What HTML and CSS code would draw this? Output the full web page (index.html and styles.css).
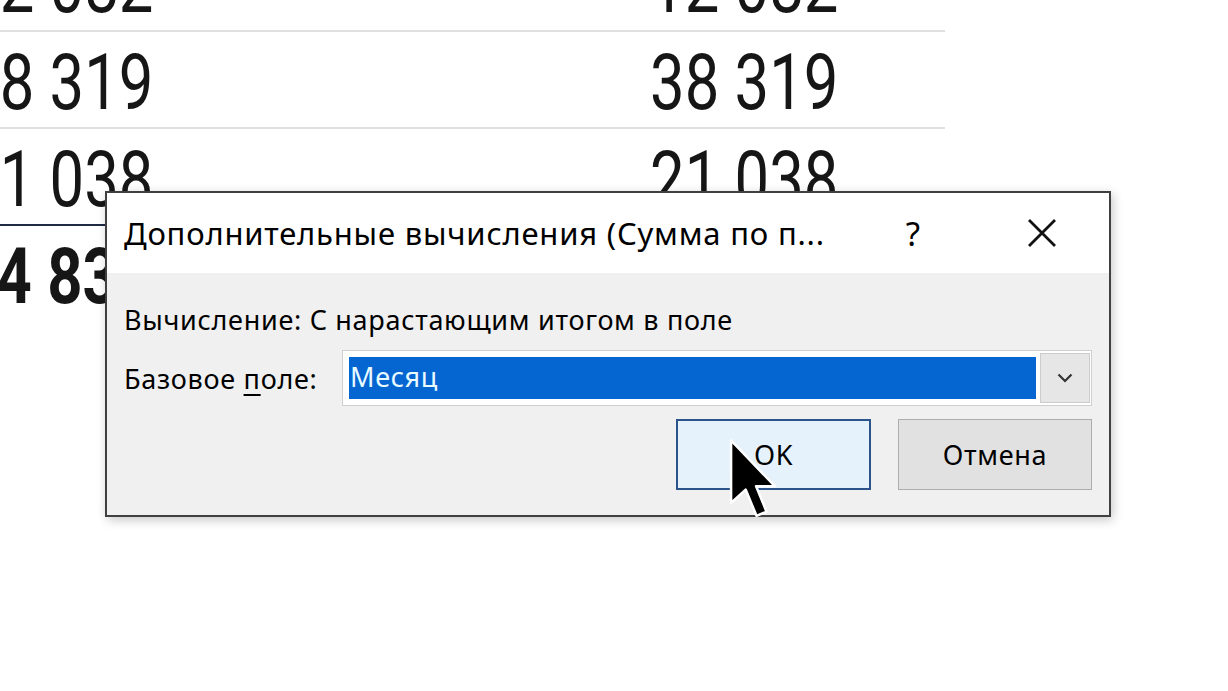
FILE: index.html
```html
<!DOCTYPE html>
<html lang="ru">
<head>
<meta charset="utf-8">
<title>Дополнительные вычисления</title>
<link rel="stylesheet" href="styles.css">
</head>
<body>
<div class="sheet">
  <div class="row">
    <div class="cell left"><span class="num">12 082</span></div>
    <div class="cell right"><span class="num">12 082</span></div>
  </div>
  <div class="row">
    <div class="cell left"><span class="num">38 319</span></div>
    <div class="cell right"><span class="num">38 319</span></div>
  </div>
  <div class="row sub">
    <div class="cell left"><span class="num">21 038</span></div>
    <div class="cell right"><span class="num">21 038</span></div>
  </div>
  <div class="row total">
    <div class="cell left"><span class="num">114 837</span></div>
    <div class="cell right"><span class="num">114 837</span></div>
  </div>
</div>

<div class="dialog">
  <div class="titlebar">
    <div class="title">Дополнительные вычисления (Сумма по п...</div>
    <div class="help">?</div>
    <div class="close">
      <svg width="30" height="30" viewBox="0 0 30 30"><path d="M2 2 L28 28 M28 2 L2 28" stroke="#111" stroke-width="2.8" fill="none"/></svg>
    </div>
  </div>
  <div class="body">
    <div class="calc">Вычисление: С нарастающим итогом в поле</div>
    <div class="field">
      <div class="label">Базовое <u>п</u>оле:</div>
      <div class="combo">
        <div class="selected">Месяц</div>
        <div class="drop">
          <svg width="16" height="10" viewBox="0 0 16 10"><path d="M1.5 1.5 L8 8 L14.5 1.5" stroke="#333" stroke-width="2.2" fill="none"/></svg>
        </div>
      </div>
    </div>
    <div class="buttons">
      <div class="btn ok">OK</div>
      <div class="btn cancel">Отмена</div>
    </div>
  </div>
</div>

<svg class="cursor" width="50" height="84" viewBox="0 0 12 20">
  <path d="M0.5 0.5 L0.5 15.5 L4 12.3 L6.6 18.6 L9 17.6 L6.5 11.5 L11 11.5 Z" fill="#000" stroke="#fff" stroke-width="0.6" stroke-linejoin="round"/>
</svg>
</body>
</html>
```
FILE: styles.css
```css
html, body {
  margin: 0;
  padding: 0;
  background: #ffffff;
  overflow: hidden;
}
body {
  width: 1228px;
  height: 691px;
  position: relative;
}
.sheet {
  width: 945px;
  margin-top: -65px;
  font-family: Roboto, "Liberation Sans", sans-serif;
  font-size: 77px;
  color: #161616;
}
.row {
  display: flex;
  height: 97px;
  box-sizing: border-box;
  border-bottom: 2px solid #e0e0e0;
}
.row.sub {
  border-bottom: 2px solid #1f2a44;
}
.row.total {
  border-bottom: none;
  font-weight: bold;
}
.cell {
  display: flex;
  justify-content: flex-end;
  box-sizing: border-box;
  line-height: 89px;
  padding-top: 7px;
  white-space: nowrap;
}
.num {
  display: inline-block;
  transform: scaleX(0.8);
  transform-origin: right center;
}
.cell.left {
  width: 160px;
  padding-right: 7px;
}
.cell.right {
  flex: 1;
  padding-right: 107px;
}

.dialog {
  position: absolute;
  left: 105px;
  top: 191px;
  width: 1006px;
  height: 326px;
  box-sizing: border-box;
  border: 2px solid #404040;
  background: #f0f0f0;
  box-shadow: 2px 3px 10px rgba(0,0,0,0.22);
  display: flex;
  flex-direction: column;
  font-family: "Noto Sans", "Open Sans", sans-serif;
  color: #000;
}
.titlebar {
  height: 80px;
  background: #ffffff;
  display: flex;
  align-items: center;
  padding-left: 17px;
  flex-shrink: 0;
}
.title {
  font-size: 31px;
  flex: 1;
  white-space: nowrap;
  letter-spacing: 0.8px;
}
.help {
  font-size: 33px;
  width: 40px;
  text-align: center;
  margin-right: 94px;
}
.close {
  width: 30px;
  height: 30px;
  margin-right: 52px;
  display: flex;
}
.body {
  padding: 30px 17px 0 17px;
  display: flex;
  flex-direction: column;
}
.calc {
  font-size: 27px;
  line-height: 34px;
  letter-spacing: 0.7px;
}
.field {
  display: flex;
  align-items: center;
  margin-top: 13px;
}
.label {
  font-size: 27px;
  width: 218px;
  letter-spacing: 0.7px;
}
.label u {
  text-underline-offset: 5px;
}
.combo {
  flex: 1;
  height: 56px;
  box-sizing: border-box;
  border: 1px solid #cfcfcf;
  background: #ffffff;
  display: flex;
  align-items: center;
  padding: 0 0 0 6px;
}
.selected {
  flex: 1;
  height: 42px;
  background: #0566d2;
  color: #e8fbff;
  font-size: 27px;
  letter-spacing: 0.7px;
  line-height: 40px;
  padding-left: 1px;
}
.drop {
  width: 50px;
  height: 50px;
  margin: 0 1px 0 4px;
  box-sizing: border-box;
  background: #e6e6e6;
  border: 1px solid #cccccc;
  display: flex;
  align-items: center;
  justify-content: center;
}
.buttons {
  display: flex;
  justify-content: flex-end;
  gap: 27px;
  margin-top: 13px;
}
.btn {
  height: 71px;
  box-sizing: border-box;
  display: flex;
  align-items: center;
  justify-content: center;
  font-size: 27px;
  letter-spacing: 0.7px;
}
.btn.ok {
  width: 195px;
  background: #e5f1fb;
  border: 2px solid #2a548a;
}
.btn.cancel {
  width: 194px;
  background: #e1e1e1;
  border: 1px solid #adadad;
}
.cursor {
  position: absolute;
  left: 729px;
  top: 438px;
}
```
